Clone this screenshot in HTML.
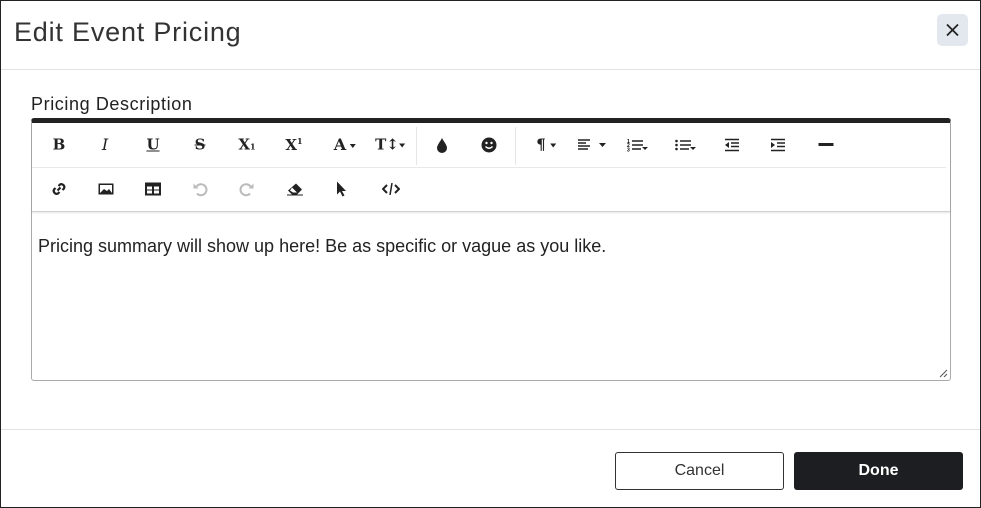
<!DOCTYPE html>
<html><head><style>
*{box-sizing:border-box;margin:0;padding:0}
body{width:981px;height:508px;background:#fff;font-family:"Liberation Sans",sans-serif;position:relative;overflow:hidden}
.frame{position:absolute;left:0;top:0;width:981px;height:508px;border:1px solid #222}
.title{position:absolute;left:14px;top:17px;font-size:27px;color:#333;letter-spacing:.8px}
.close{position:absolute;left:937px;top:14px;width:31px;height:32px;background:#e3e7ee;border-radius:5px}
.hr1{position:absolute;left:1px;right:1px;top:69px;height:1px;background:#e2e2e2}
.hr2{position:absolute;left:1px;right:1px;top:429px;height:1px;background:#e2e2e2}
.label{position:absolute;left:31px;top:94px;font-size:18px;color:#222;letter-spacing:.6px}
.ed{position:absolute;left:31px;top:118px;width:920px;height:263px;border:1px solid #aaa;border-top:5px solid #222;border-radius:3px}
.tb{position:absolute;left:0;top:0;width:918px;height:89px;border-bottom:1px solid #d0d0d0;box-shadow:0 1px 2px rgba(0,0,0,.1)}
.rowline{position:absolute;left:0;top:44px;width:914px;height:1px;background:#e8e8e8}
.sep{position:absolute;top:4px;width:1px;height:38px;background:#e6e6e6}
.i{position:absolute;transform:translate(-50%,-50%);font-family:"DejaVu Serif",serif;font-weight:bold;font-size:16px;color:#222;white-space:nowrap;line-height:1}
.i svg{display:block}
.caret{display:inline-block;width:0;height:0;border-left:3.5px solid transparent;border-right:3.5px solid transparent;border-top:4px solid #222;vertical-align:middle;margin-left:4px}
.txt{position:absolute;left:6px;top:113px;font-size:18px;color:#222}
.btn{position:absolute;top:452px;width:169px;height:38px;border-radius:3px;font-size:16px;display:flex;align-items:center;justify-content:center}
.cancel{left:615px;border:1px solid #333;color:#333}
.done{left:794px;background:#1d1e21;color:#fff;font-weight:bold}
</style></head><body>
<div class="frame"></div>
<div class="title">Edit Event Pricing</div>
<div class="close"><svg width="31" height="32"><path d="M10 10.5L21 21.5M21 10.5L10 21.5" stroke="#222" stroke-width="1.8"/></svg></div>
<div class="hr1"></div>
<div class="label">Pricing Description</div>
<div class="ed">
 <div class="tb">
  <div class="rowline"></div>
  <div class="sep" style="left:384px"></div>
  <div class="sep" style="left:483px"></div>
  <div class="i" style="left:27px;top:22px;font-size:15px">B</div>
  <div class="i" style="left:73px;top:22px;font-style:italic;font-weight:normal">I</div>
  <div class="i" style="left:121px;top:22px;font-size:15px;text-decoration:underline">U</div>
  <div class="i" style="left:168px;top:22px;font-size:15px;text-decoration:line-through">S</div>
  <div class="i" style="left:215px;top:22px;font-size:15px">X<span style="font-size:8px">1</span></div>
  <div class="i" style="left:262px;top:22px;font-size:15px">X<sup style="font-size:8px">1</sup></div>
  <div class="i" style="left:313px;top:22px;font-size:16px">A<span class="caret"></span></div>
  <div class="i" style="left:358px;top:22px;font-size:15px">T↕<span class="caret" style="margin-left:0"></span></div>
  <div class="i" style="left:410px;top:22px"><svg width="12" height="16"><path d="M6 1C4 5 1 8 1 11a5 5 0 0010 0C11 8 8 5 6 1z" fill="#222"/></svg></div>
  <div class="i" style="left:457px;top:22px"><svg width="16" height="16"><circle cx="8" cy="8" r="7.5" fill="#222"/><circle cx="5.5" cy="6" r="1.2" fill="#fff"/><circle cx="10.5" cy="6" r="1.2" fill="#fff"/><path d="M4.5 9.5Q8 13 11.5 9.5" stroke="#fff" stroke-width="1.3" fill="none"/></svg></div>
  <div class="i" style="left:514px;top:22px;font-size:15px">¶<span class="caret"></span></div>
  <div class="i" style="left:560px;top:22px"><svg width="28" height="14"><path d="M0 2h12M0 5h8M0 8h12M0 11h10" stroke="#222" stroke-width="1.6"/><path d="M21 5l3.5 4 3.5-4z" fill="#222"/></svg></div>
  <div class="i" style="left:606px;top:22px"><svg width="22" height="14"><text x="0" y="5" font-size="5" font-family="Liberation Sans">1</text><text x="0" y="9" font-size="5" font-family="Liberation Sans">2</text><text x="0" y="13.5" font-size="5" font-family="Liberation Sans">3</text><path d="M5 3h11M5 7h11M5 11h9" stroke="#222" stroke-width="1.6"/><path d="M15 9l3 3 3-3z" fill="#222"/></svg></div>
  <div class="i" style="left:654px;top:22px"><svg width="22" height="14"><circle cx="1.5" cy="3" r="1.3" fill="#222"/><circle cx="1.5" cy="7" r="1.3" fill="#222"/><circle cx="1.5" cy="11" r="1.3" fill="#222"/><path d="M5 3h11M5 7h11M5 11h9" stroke="#222" stroke-width="1.6"/><path d="M15 9l3 3 3-3z" fill="#222"/></svg></div>
  <div class="i" style="left:700px;top:22px"><svg width="14" height="14"><path d="M0 1.5h14M6 5h8M6 8.5h8M0 12.5h14" stroke="#222" stroke-width="1.6"/><path d="M4 4v6L0 7z" fill="#222"/></svg></div>
  <div class="i" style="left:746px;top:22px"><svg width="14" height="14"><path d="M0 1.5h14M6 5h8M6 8.5h8M0 12.5h14" stroke="#222" stroke-width="1.6"/><path d="M0 4v6l4-3z" fill="#222"/></svg></div>
  <div class="i" style="left:794px;top:22px"><svg width="15" height="4"><rect width="15" height="3" fill="#222"/></svg></div>
  <div class="i" style="left:27px;top:66px"><svg width="15" height="15"><g fill="none" stroke="#222" stroke-width="2.2"><path d="M6 9L9 6"/><path d="M7 4.5l1.5-1.5a3 3 0 014 4L11 8.5"/><path d="M8 10.5L6.5 12a3 3 0 01-4-4L4 6.5"/></g></svg></div>
  <div class="i" style="left:74px;top:66px"><svg width="16" height="12"><rect x="0.5" y="0.5" width="15" height="11" fill="#222"/><rect x="2" y="2" width="12" height="8" fill="#fff"/><path d="M2 10l4-4 3 2 2-2 3 4z" fill="#222"/></svg></div>
  <div class="i" style="left:121px;top:66px"><svg width="16" height="13"><rect x="0" y="0" width="16" height="13" fill="#222"/><rect x="2" y="4" width="5" height="3" fill="#fff"/><rect x="9" y="4" width="5" height="3" fill="#fff"/><rect x="2" y="8" width="5" height="3" fill="#fff"/><rect x="9" y="8" width="5" height="3" fill="#fff"/></svg></div>
  <div class="i" style="left:168px;top:66px"><svg width="15" height="15"><path d="M4 5a5.5 5.5 0 11.5 7" fill="none" stroke="#bbb" stroke-width="2"/><path d="M1 2v5h5z" fill="#bbb"/></svg></div>
  <div class="i" style="left:215px;top:66px"><svg width="15" height="15"><path d="M11 5a5.5 5.5 0 10-.5 7" fill="none" stroke="#bbb" stroke-width="2"/><path d="M14 2v5H9z" fill="#bbb"/></svg></div>
  <div class="i" style="left:263px;top:66px"><svg width="16" height="13"><path d="M9 1l6 6-5 5H5L1 8z" fill="#222"/><path d="M5 5l5 5H6L3 8z" fill="#fff"/><path d="M0 12.5h16" stroke="#222" stroke-width="1"/></svg></div>
  <div class="i" style="left:309px;top:66px"><svg width="10" height="15"><path d="M1 0v13l3-3 2.5 5 2-1-2.5-4.5H10z" fill="#222"/></svg></div>
  <div class="i" style="left:359px;top:66px"><svg width="18" height="12"><path d="M5 2L1 6l4 4M13 2l4 4-4 4" fill="none" stroke="#222" stroke-width="2"/><path d="M10 0L8 12" stroke="#222" stroke-width="1.5"/></svg></div>
 </div>
 <div class="txt">Pricing summary will show up here! Be as specific or vague as you like.</div>
 <svg style="position:absolute;right:2px;bottom:2px" width="9" height="9"><path d="M1 8L8 1M5 8L8 5" stroke="#555" stroke-width="1"/></svg>
</div>
<div class="hr2"></div>
<div class="btn cancel">Cancel</div>
<div class="btn done">Done</div>
</body></html>
